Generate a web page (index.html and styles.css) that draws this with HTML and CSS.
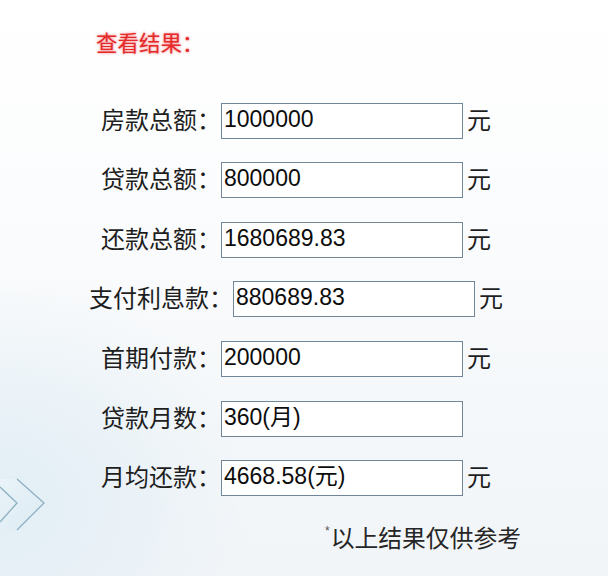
FILE: index.html
```html
<!DOCTYPE html>
<html lang="zh-CN">
<head>
<meta charset="utf-8">
<title>查看结果</title>
<link rel="stylesheet" href="styles.css">
</head>
<body>
<div class="page">
  <svg class="chevrons" width="50" height="62" viewBox="0 0 50 62" aria-hidden="true">
    <defs>
      <linearGradient id="cg" x1="0" y1="0" x2="1" y2="1">
        <stop offset="0" stop-color="#e9f3f8"/>
        <stop offset="1" stop-color="#dcebf3"/>
      </linearGradient>
    </defs>
    <polygon points="0,4 17,4 44,28 17,55 0,55" fill="url(#cg)"/>
    <polyline points="17,4 44,28 17,55" fill="none" stroke="#8db1c2" stroke-width="1.3"/>
    <polyline points="0,12 17,28 0,47" fill="none" stroke="#8db1c2" stroke-width="1.3"/>
  </svg>

  <h2 class="title">查看结果：</h2>

  <div class="rows">
    <div class="row">
      <span class="label">房款总额：</span>
      <div class="field">1000000</div>
      <span class="unit">元</span>
    </div>
    <div class="row">
      <span class="label">贷款总额：</span>
      <div class="field">800000</div>
      <span class="unit">元</span>
    </div>
    <div class="row">
      <span class="label">还款总额：</span>
      <div class="field">1680689.83</div>
      <span class="unit">元</span>
    </div>
    <div class="row">
      <span class="label">支付利息款：</span>
      <div class="field">880689.83</div>
      <span class="unit">元</span>
    </div>
    <div class="row">
      <span class="label">首期付款：</span>
      <div class="field">200000</div>
      <span class="unit">元</span>
    </div>
    <div class="row">
      <span class="label">贷款月数：</span>
      <div class="field">360(月)</div>
      <span class="unit unit-hidden">元</span>
    </div>
    <div class="row">
      <span class="label">月均还款：</span>
      <div class="field">4668.58(元)</div>
      <span class="unit">元</span>
    </div>
  </div>

  <p class="note"><span class="star">*</span>以上结果仅供参考</p>
</div>
</body>
</html>
```

FILE: styles.css
```css
html, body {
  margin: 0;
  padding: 0;
}

body {
  width: 608px;
  height: 576px;
  overflow: hidden;
  background:
    radial-gradient(ellipse 260px 220px at 0px 500px, rgba(224, 237, 245, 0.95), rgba(224, 237, 245, 0) 100%),
    linear-gradient(to bottom, #ffffff 0%, #fbfcfd 35%, #f5f8fa 70%, #f2f5f8 100%);
  font-family: "Noto Sans CJK SC", "Liberation Sans", sans-serif;
  color: #222;
}

.page {
  position: relative;
  width: 592px;
  height: 576px;
}

.chevrons {
  position: absolute;
  left: 0;
  top: 475px;
}

.title {
  margin: 0;
  padding: 27px 0 0 96px;
  font-size: 21.5px;
  line-height: 30px;
  font-weight: normal;
  color: #e52a2a;
  text-shadow: 0 0 2.5px rgba(235, 50, 50, 0.7);
}

.rows {
  display: flex;
  flex-direction: column;
  align-items: center;
  gap: 23.6px;
  margin-top: 45.7px;
}

.row {
  display: flex;
  align-items: flex-start;
}

.label,
.unit {
  font-size: 24px;
  line-height: 32px;
  color: #1e1e1e;
  white-space: nowrap;
}

.unit {
  margin-left: 4px;
}

.unit-hidden {
  visibility: hidden;
}

.field {
  box-sizing: border-box;
  width: 242px;
  height: 36px;
  padding-left: 2px;
  border: 1px solid #72869a;
  background: #ffffff;
  font-family: "Liberation Sans", "Noto Sans CJK SC", sans-serif;
  font-size: 23px;
  line-height: 30px;
  color: #0c0c0c;
  white-space: nowrap;
}

.note {
  margin: 26px 0 0 325px;
  font-size: 23.8px;
  line-height: 30px;
  color: #262626;
  white-space: nowrap;
}

.star {
  display: inline-block;
  font-family: "Liberation Sans", sans-serif;
  font-size: 12px;
  line-height: 12px;
  vertical-align: 12px;
  margin-right: 1px;
  color: #555;
}
```
